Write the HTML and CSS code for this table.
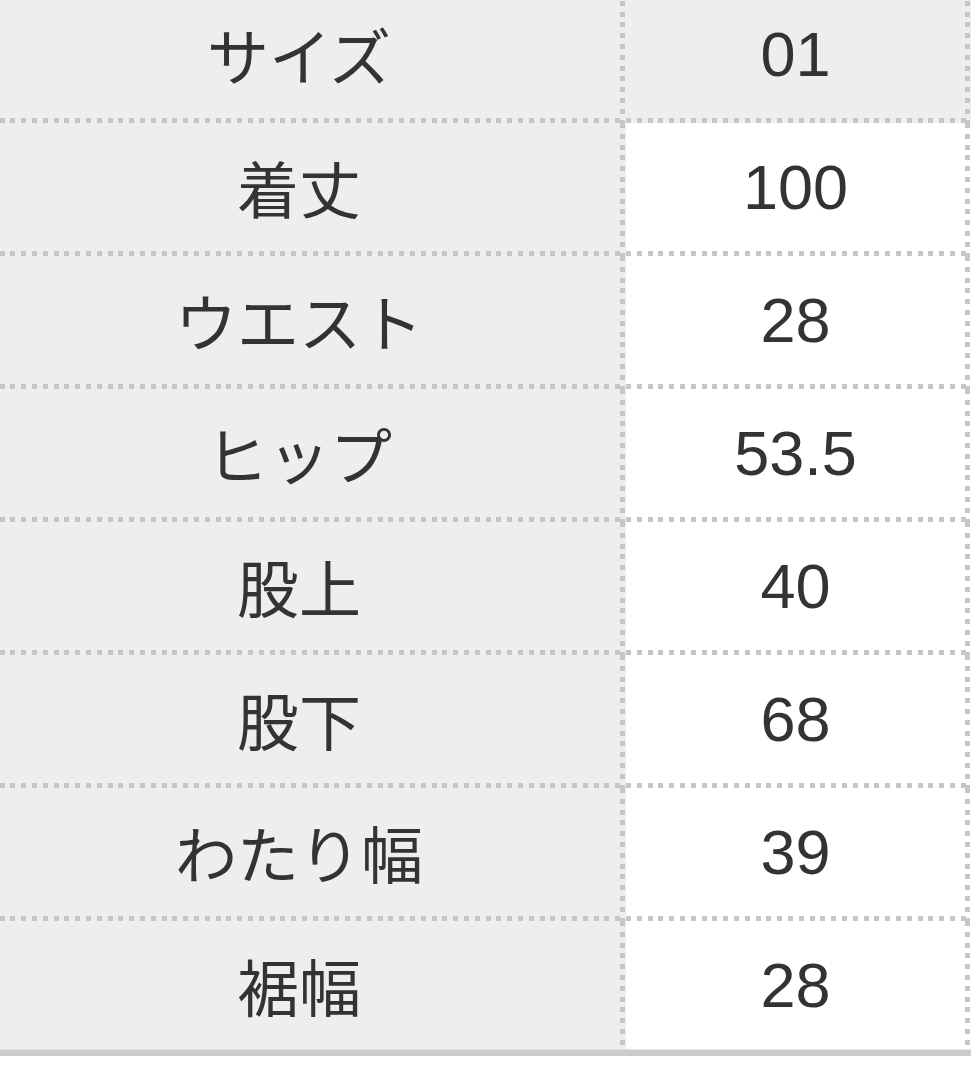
FILE: index.html
```html
<!DOCTYPE html>
<html lang="ja">
<head>
<meta charset="utf-8">
<title>サイズ表</title>
<link rel="stylesheet" href="styles.css">
</head>
<body>
<div class="size-table">
  <div class="row head">
    <div class="label">サイズ</div>
    <div class="value">01</div>
  </div>
  <div class="row">
    <div class="label">着丈</div>
    <div class="value">100</div>
  </div>
  <div class="row">
    <div class="label">ウエスト</div>
    <div class="value">28</div>
  </div>
  <div class="row">
    <div class="label">ヒップ</div>
    <div class="value">53.5</div>
  </div>
  <div class="row">
    <div class="label">股上</div>
    <div class="value">40</div>
  </div>
  <div class="row">
    <div class="label">股下</div>
    <div class="value">68</div>
  </div>
  <div class="row">
    <div class="label">わたり幅</div>
    <div class="value">39</div>
  </div>
  <div class="row last">
    <div class="label">裾幅</div>
    <div class="value">28</div>
  </div>
</div>
</body>
</html>
```

FILE: styles.css
```css
html, body {
  margin: 0;
  padding: 0;
  background: #ffffff;
  overflow: hidden;
}

.size-table {
  margin-top: -10px;
  margin-left: -22px;
  width: 993px;
  font-family: "Liberation Sans", "Noto Sans CJK JP", sans-serif;
  font-size: 63px;
  color: #333333;
  border-bottom: 6px solid #cbcbcb;
  box-shadow: 0 3px 0 #f4f4f4;
}

.row {
  display: grid;
  grid-template-columns: 648px 345px;
}

.label,
.value {
  display: flex;
  align-items: center;
  justify-content: center;
  height: 133px;
  padding: 0 6px 5px 0;
  box-sizing: border-box;
  background-image:
    repeating-linear-gradient(to bottom, #c6c6c6 0 5px, transparent 5px 10.8px),
    repeating-linear-gradient(to right, #c6c6c6 0 5px, transparent 5px 10.8px);
  background-size: 5px 100%, 100% 5px;
  background-repeat: no-repeat, no-repeat;
  background-position: calc(100% - 1px) 0, 0 100%;
}

.row.last .label,
.row.last .value {
  height: 129px;
  padding-bottom: 1px;
  background-image: repeating-linear-gradient(to bottom, #c6c6c6 0 5px, transparent 5px 10.8px);
  background-size: 5px calc(100% - 3px);
  background-position: calc(100% - 1px) 0;
  border-bottom: 1px solid #e2e2e2;
}

.label {
  background-color: #eeeeee;
  font-family: "Noto Sans CJK JP", sans-serif;
  font-weight: 400;
  font-size: 62px;
}

.value {
  background-color: #ffffff;
}

.head .value {
  background-color: #eeeeee;
}
```
